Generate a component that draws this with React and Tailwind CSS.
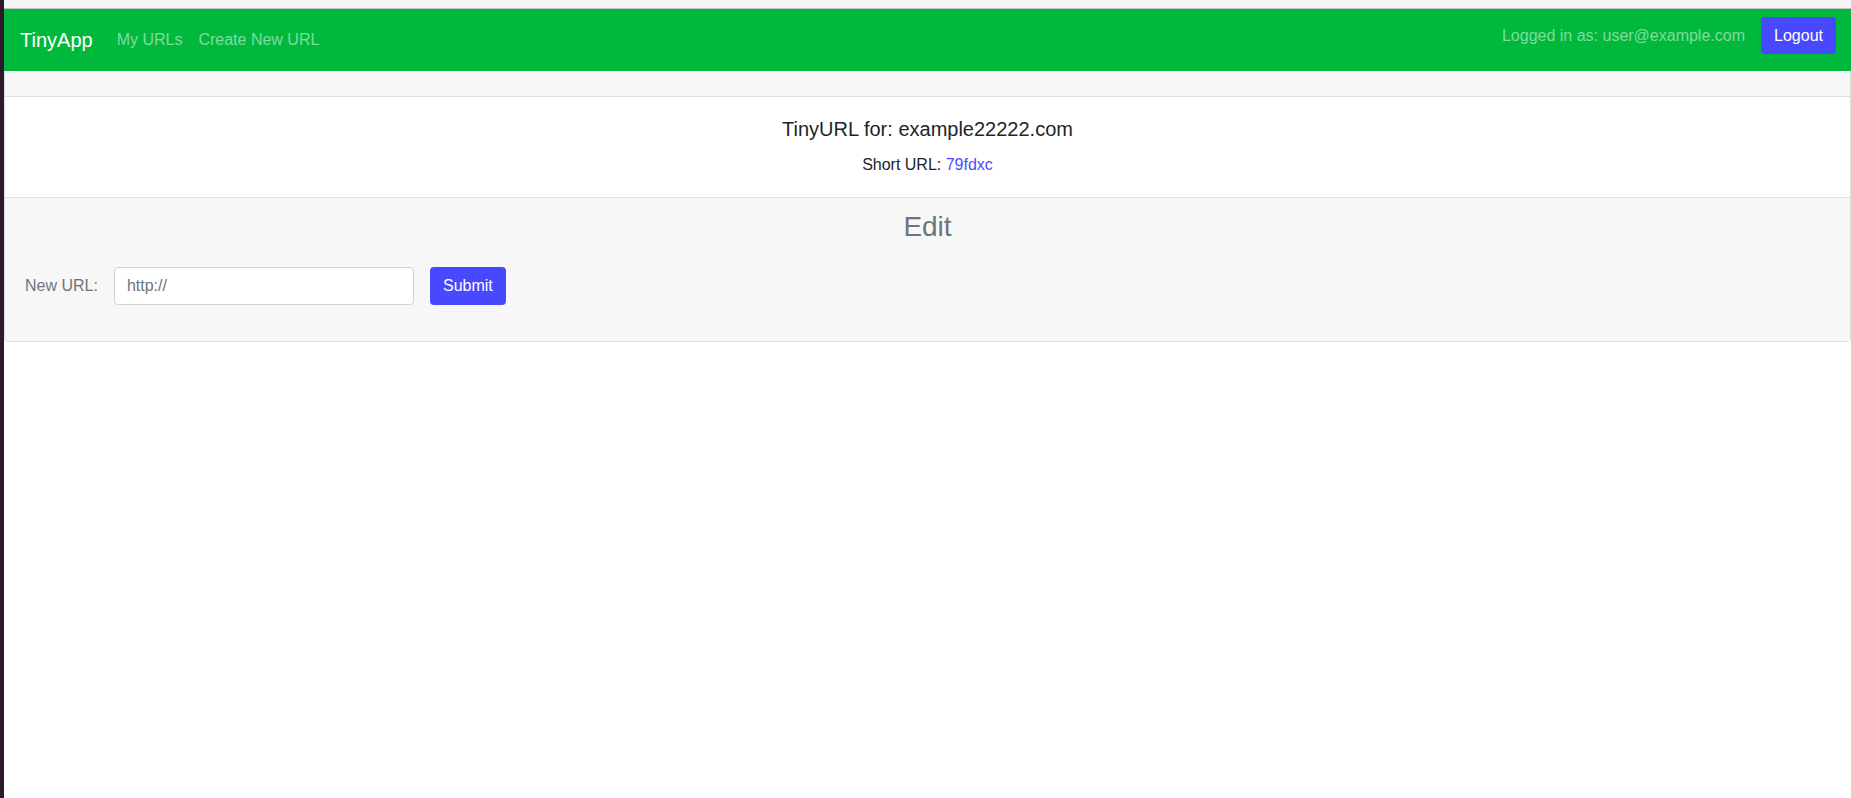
import React, { useState } from 'react';

const App = () => {
  const [newUrl, setNewUrl] = useState('');

  return (
    <div className="flex min-h-[798px] bg-white font-['Liberation_Sans',Arial,sans-serif] text-[16px] text-[#212529]">
      {/* desktop edge */}
      <div className="w-1 shrink-0 bg-[#2c1a2a]"></div>

      <div className="flex-1 flex flex-col">
        {/* top strip */}
        <div className="h-[9px] bg-[#f5f5f5] border-b border-[#c4c4c4]"></div>

        {/* Navbar */}
        <nav className="h-[62px] bg-[#00b83c] flex justify-between pl-4 pr-[15px]">
          <div className="flex items-center">
            <a href="#" className="text-[20px] text-white mr-4 leading-[30px]">TinyApp</a>
            <a href="#" className="px-2 text-white/50">My URLs</a>
            <a href="#" className="px-2 text-white/50">Create New URL</a>
          </div>
          <div className="flex items-center self-start mt-2 h-[37px]">
            <span className="text-white/50 mr-4">Logged in as: user@example.com</span>
            <button className="h-[37px] w-[75px] rounded bg-[#4848ff] text-white">Logout</button>
          </div>
        </nav>

        {/* Card */}
        <div className="border border-t-0 border-[#dfdfdf] rounded-b">
          <div className="h-[26px] bg-[#f7f7f7] border-b border-[#dfdfdf]"></div>

          <div className="text-center pt-5 pb-[20px] border-b border-[#dfdfdf]">
            <h5 className="text-[20px] leading-[24px]">TinyURL for: example22222.com</h5>
            <p className="mt-[12px] leading-[24px]">
              Short URL: <a href="#" className="text-[#4b4bff]">79fdxc</a>
            </p>
          </div>

          <div className="bg-[#f7f7f7] px-5 pt-3 pb-[36px]">
            <h3 className="text-center text-[28px] leading-[34px] text-[#6c757d] mb-[23px]">Edit</h3>
            <form className="flex items-center" onSubmit={(e) => e.preventDefault()}>
              <label className="text-[#6c757d] mr-4">New URL:</label>
              <input
                type="text"
                value={newUrl}
                onChange={(e) => setNewUrl(e.target.value)}
                placeholder="http://"
                className="w-[300px] h-[38px] px-3 bg-white border border-[#ced4da] rounded placeholder-[#6c757d] outline-none"
              />
              <button type="submit" className="ml-4 h-[38px] w-[76px] rounded bg-[#4848ff] text-white">
                Submit
              </button>
            </form>
          </div>
        </div>
      </div>
    </div>
  );
};

export default App;
